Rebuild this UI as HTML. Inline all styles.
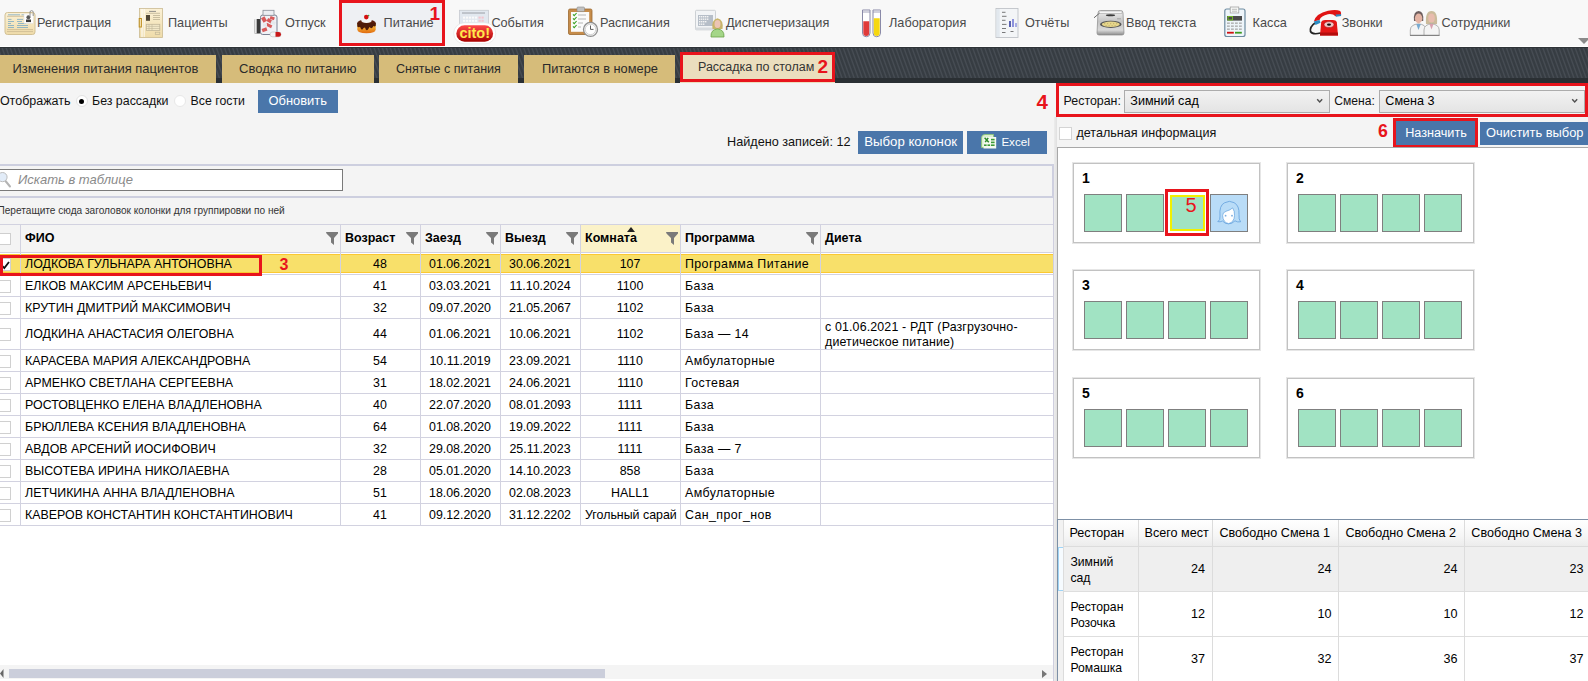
<!DOCTYPE html><html><head><meta charset="utf-8"><style>
*{box-sizing:border-box;margin:0;padding:0}
html,body{width:1588px;height:681px;overflow:hidden}
body{position:relative;background:#f4f4f4;font-family:"Liberation Sans",sans-serif;color:#222}
.t{position:absolute;line-height:1;white-space:nowrap}
.b{position:absolute}
svg{position:absolute;overflow:visible}
</style></head><body><div class="b" style="left:0px;top:0px;width:1588px;height:46px;background:#f8f8f8"></div>
<div class="b" style="left:0px;top:46px;width:1588px;height:1px;background:#ffffff"></div>
<div class="b" style="left:339px;top:0px;width:106px;height:46px;background:#eef0f3"></div>
<div class="t" style="left:37px;top:17px;font-size:12.7px;color:#4a4a4a;">Регистрация</div>
<div class="t" style="left:168px;top:17px;font-size:12.7px;color:#4a4a4a;">Пациенты</div>
<div class="t" style="left:285px;top:17px;font-size:12.7px;color:#4a4a4a;">Отпуск</div>
<div class="t" style="left:383.6px;top:17px;font-size:12.7px;color:#4a4a4a;">Питание</div>
<div class="t" style="left:491.4px;top:17px;font-size:12.7px;color:#4a4a4a;">События</div>
<div class="t" style="left:600px;top:17px;font-size:12.7px;color:#4a4a4a;">Расписания</div>
<div class="t" style="left:726px;top:17px;font-size:12.7px;color:#4a4a4a;">Диспетчеризация</div>
<div class="t" style="left:889px;top:17px;font-size:12.7px;color:#4a4a4a;">Лаборатория</div>
<div class="t" style="left:1025px;top:17px;font-size:12.7px;color:#4a4a4a;">Отчёты</div>
<div class="t" style="left:1126px;top:17px;font-size:12.7px;color:#4a4a4a;">Ввод текста</div>
<div class="t" style="left:1252.6px;top:17px;font-size:12.7px;color:#4a4a4a;">Касса</div>
<div class="t" style="left:1341.7px;top:17px;font-size:12.7px;color:#4a4a4a;">Звонки</div>
<div class="t" style="left:1441.6px;top:17px;font-size:12.7px;color:#4a4a4a;">Сотрудники</div>

<svg style="left:0;top:0" width="1588" height="47" viewBox="0 0 1588 47">
<defs>
<linearGradient id="gCream" x1="0" y1="0" x2="0" y2="1"><stop offset="0" stop-color="#fbf1d6"/><stop offset="1" stop-color="#efdcaa"/></linearGradient>
<linearGradient id="gRed" x1="0" y1="0" x2="0" y2="1"><stop offset="0" stop-color="#ff4a4a"/><stop offset="1" stop-color="#a80000"/></linearGradient>
<linearGradient id="gGray" x1="0" y1="0" x2="0" y2="1"><stop offset="0" stop-color="#e6e6e6"/><stop offset="1" stop-color="#9a9a9a"/></linearGradient>
<linearGradient id="gCake" x1="0" y1="0" x2="0" y2="1"><stop offset="0" stop-color="#ffd040"/><stop offset="1" stop-color="#e06a10"/></linearGradient>
</defs>
<!-- 1 registration card -->
<rect x="5" y="12.5" width="30" height="22" rx="2.5" fill="url(#gCream)" stroke="#d2c196" stroke-width="1"/>
<g stroke="#6aa2c4" stroke-width="0.7">
<line x1="8" y1="14.8" x2="20" y2="14.8"/><line x1="21.5" y1="14.8" x2="24" y2="14.8"/>
<line x1="8" y1="19.4" x2="11.5" y2="19.4"/><line x1="17" y1="19.4" x2="23" y2="19.4"/>
<line x1="8" y1="21.5" x2="14" y2="21.5"/><line x1="17" y1="21.5" x2="22" y2="21.5"/>
<line x1="8" y1="23.5" x2="11" y2="23.5"/><line x1="18" y1="23.5" x2="26" y2="23.5"/>
<line x1="8" y1="25.5" x2="14" y2="25.5"/><line x1="17" y1="25.5" x2="28" y2="25.5"/>
<line x1="8" y1="27.5" x2="14" y2="27.5"/><line x1="17" y1="27.5" x2="28" y2="27.5"/>
</g>
<g stroke="#c9b88f" stroke-width="0.8"><line x1="7" y1="16.3" x2="33" y2="16.3"/><line x1="7" y1="29.6" x2="33" y2="29.6"/><line x1="7" y1="31.6" x2="33" y2="31.6"/></g>
<rect x="24" y="14" width="9.2" height="9.4" fill="#fff" stroke="#ddd" stroke-width="0.5"/>
<circle cx="28.4" cy="17.2" r="2" fill="#5a5a5a"/><rect x="26" y="19.5" width="5" height="2.6" fill="#3a3a3a"/>
<path d="M30 17 V12.2 a1.6 1.6 0 0 1 3.2 0 V16" fill="none" stroke="#8a8a8a" stroke-width="0.9"/>
<!-- 2 patients doc -->
<rect x="139.5" y="8.5" width="23" height="29" fill="url(#gCream)" stroke="#cbbb92" stroke-width="0.8"/>
<line x1="142" y1="9" x2="142" y2="37" stroke="#fff" stroke-width="1"/><line x1="144.2" y1="9" x2="144.2" y2="37" stroke="#fff" stroke-width="0.8"/>
<rect x="139.2" y="18.5" width="2.2" height="8.5" fill="none" stroke="#c09020" stroke-width="1"/>
<line x1="149" y1="11.4" x2="156" y2="11.4" stroke="#777" stroke-width="0.8"/>
<line x1="146" y1="13.3" x2="160" y2="13.3" stroke="#bcb394" stroke-width="0.8"/>
<rect x="146" y="15" width="4" height="5.8" fill="#4f4636"/>
<g stroke="#bcb394" stroke-width="0.8"><line x1="153" y1="15.5" x2="160" y2="15.5"/><line x1="153" y1="17.5" x2="160" y2="17.5"/><line x1="153" y1="19.5" x2="160" y2="19.5"/></g>
<rect x="146.3" y="24.3" width="13.5" height="6.3" fill="#f3e8c8" stroke="#c0b698" stroke-width="0.8"/>
<g stroke="#c0b698" stroke-width="0.6"><line x1="146" y1="26.4" x2="160" y2="26.4"/><line x1="146" y1="28.5" x2="160" y2="28.5"/><line x1="149" y1="24.3" x2="149" y2="30.6"/><line x1="152" y1="24.3" x2="152" y2="30.6"/></g>
<rect x="155.3" y="32.2" width="4.5" height="2.3" fill="none" stroke="#c0b698" stroke-width="0.7"/>
<!-- 3 pills jar -->
<rect x="254" y="19" width="7" height="14.5" rx="1.5" fill="#3a3a3a"/><rect x="254.2" y="19" width="2.5" height="14.5" fill="#e8e8e8"/>
<rect x="260.5" y="15" width="16.5" height="19.5" rx="2.2" fill="#f0f2f6" stroke="#7a8294" stroke-width="1"/>
<rect x="263" y="10.3" width="11" height="5" fill="#eceef2" stroke="#8a8e98" stroke-width="0.8"/>
<g fill="#d85a5a"><rect x="262" y="17" width="4" height="5" transform="rotate(-30 264 19.5)"/><rect x="267" y="19" width="5" height="3.5" transform="rotate(30 269.5 20.7)"/><rect x="270" y="16.5" width="4.5" height="3" transform="rotate(20 272 18)"/><rect x="266" y="24" width="6" height="3" transform="rotate(25 269 25.5)"/><rect x="262" y="28" width="5" height="3.5" transform="rotate(-20 264.5 29.7)"/></g>
<g fill="#e4e8ec"><rect x="271" y="21" width="4.5" height="3" transform="rotate(25 273 22.5)"/><rect x="263" y="23.5" width="4" height="3"/></g>
<rect x="270" y="32" width="11" height="4.8" rx="2.4" fill="#f4f4f4" stroke="#b0b0b0" stroke-width="0.5"/><path d="M275.5 32 H278.6 a2.4 2.4 0 0 1 0 4.8 H275.5 Z" fill="#c81818"/>
<!-- 4 cake -->
<path d="M357.3 23.5 V29.5 Q357.5 33.3 366.5 33.3 Q375.5 33.3 375.7 29.5 V23.5 Z" fill="url(#gCake)"/>
<ellipse cx="366.5" cy="23" rx="9.3" ry="3.6" fill="#5a1e0a"/>
<path d="M357.2 23 L357.3 26.5 Q358.5 28 360 26.8 L361 29 Q362.5 30.5 363.5 28 L365 27.5 Q366 31.5 368 29.5 L369.5 27 Q371 29 372.5 27.5 L373.5 26 Q375 27 375.8 25.5 L375.8 23 Z" fill="#4e1a08"/>
<ellipse cx="366.5" cy="20.6" rx="5.2" ry="2.4" fill="#f4f4f4"/>
<circle cx="366.3" cy="17.1" r="2.3" fill="#d41010"/><circle cx="368.6" cy="15.6" r="0.8" fill="#40a030"/>
<!-- 5 cito -->
<rect x="459.5" y="10.3" width="29" height="14" fill="#e2e8ef" stroke="#c6cad0" stroke-width="0.8"/>
<line x1="462" y1="13" x2="485" y2="13" stroke="#8a8e94" stroke-width="0.8"/>
<g fill="#fafafa"><rect x="463" y="16.6" width="2.2" height="2"/><rect x="466" y="16.6" width="2.2" height="2"/><rect x="469" y="16.6" width="2.2" height="2"/><rect x="472" y="16.6" width="2.2" height="2"/><rect x="475" y="16.6" width="2.2" height="2"/><rect x="463" y="19.8" width="2.2" height="2"/><rect x="466" y="19.8" width="2.2" height="2"/><rect x="469" y="19.8" width="2.2" height="2"/><rect x="472" y="19.8" width="2.2" height="2"/><rect x="475" y="19.8" width="2.2" height="2"/></g>
<g fill="#f4c4cc"><rect x="478.5" y="16.6" width="2.2" height="2"/><rect x="481.5" y="16.6" width="2.2" height="2"/><rect x="478.5" y="19.8" width="2.2" height="2"/><rect x="481.5" y="19.8" width="2.2" height="2"/></g>
<rect x="453.7" y="22.8" width="42" height="21" rx="10.5" fill="#fff" stroke="#e0e0e0" stroke-width="0.6"/>
<rect x="456.3" y="25.2" width="36.8" height="16.6" rx="8.3" fill="url(#gRed)"/>
<text x="474.7" y="38.3" text-anchor="middle" font-family="Liberation Sans" font-weight="bold" font-size="14.5" fill="#ffe84a">cito!</text>
<!-- 6 schedule -->
<rect x="568.5" y="9" width="23.5" height="25.5" rx="1.5" fill="#c68c4a" stroke="#9a6830" stroke-width="0.8"/>
<rect x="571" y="12" width="18.2" height="19.8" fill="#fbfbfb"/>
<rect x="577" y="7" width="7.5" height="4.6" rx="1" fill="#c0c0c0" stroke="#8a8a8a" stroke-width="0.6"/>
<g fill="none" stroke="#38a020" stroke-width="1.1"><path d="M573 14.3 l1.2 1.3 l2.4 -2.6"/><path d="M573 18.3 l1.2 1.3 l2.4 -2.6"/><path d="M573 22.3 l1.2 1.3 l2.4 -2.6"/><path d="M573 26.3 l1.2 1.3 l2.4 -2.6"/></g>
<g stroke="#999" stroke-width="0.7"><line x1="578" y1="15" x2="586" y2="15"/><line x1="578" y1="19" x2="586" y2="19"/><line x1="578" y1="23" x2="583" y2="23"/><line x1="578" y1="27" x2="581" y2="27"/></g>
<circle cx="590.5" cy="29.4" r="7" fill="#f2f2f2" stroke="#8e8e8e" stroke-width="1.3"/><circle cx="590.5" cy="29.4" r="5.2" fill="#fff" stroke="#bbb" stroke-width="0.6"/>
<path d="M590.5 25.5 V29.4 H593.5" fill="none" stroke="#333" stroke-width="0.8"/>
<!-- 7 dispatch -->
<rect x="695.5" y="10.3" width="20" height="19.5" rx="1" fill="#f2f4f6" stroke="#c2c6ca" stroke-width="0.8"/>
<rect x="698" y="15" width="15" height="11" fill="#b6bec8"/>
<g fill="#f4f4f4"><rect x="699" y="16" width="1.4" height="1.4"/><rect x="701" y="16" width="1.4" height="1.4"/><rect x="703" y="16" width="1.4" height="1.4"/><rect x="705" y="16" width="1.4" height="1.4"/><rect x="707" y="16" width="1.4" height="1.4"/><rect x="699" y="18.5" width="1.4" height="1.4"/><rect x="701" y="18.5" width="1.4" height="1.4"/><rect x="703" y="18.5" width="1.4" height="1.4"/><rect x="705" y="18.5" width="1.4" height="1.4"/><rect x="707" y="18.5" width="1.4" height="1.4"/><rect x="699" y="21" width="1.4" height="1.4"/><rect x="701" y="21" width="1.4" height="1.4"/><rect x="703" y="21" width="1.4" height="1.4"/><rect x="705" y="21" width="1.4" height="1.4"/><rect x="699" y="23.5" width="1.4" height="1.4"/><rect x="701" y="23.5" width="1.4" height="1.4"/><rect x="703" y="23.5" width="1.4" height="1.4"/></g>
<rect x="695.5" y="27.5" width="20" height="2.3" fill="#d8dce0"/>
<path d="M712.5 29 Q711 20 717.5 18.2 Q724 20 722.5 29 Z" fill="#c8b46a"/>
<ellipse cx="717.5" cy="24" rx="3" ry="4" fill="#ecc4b4"/>
<path d="M711 37 Q710.5 29.5 717.5 29 Q724.5 29.5 724 37 Z" fill="#a4d688" stroke="#6aa248" stroke-width="0.8"/>
<!-- 8 lab -->
<path d="M862.5 10 H870 V33 a3.75 3.75 0 0 1 -7.5 0 Z" fill="#fff" stroke="#8a8aa8" stroke-width="1"/>
<path d="M863.3 21.3 H869.2 V33 a2.95 2.95 0 0 1 -5.9 0 Z" fill="#e03a3a"/>
<line x1="862.5" y1="12" x2="870" y2="12" stroke="#8a8aa8" stroke-width="0.8"/>
<path d="M873 10 H880.5 V33 a3.75 3.75 0 0 1 -7.5 0 Z" fill="#fff" stroke="#8a8aa8" stroke-width="1"/>
<path d="M873.8 18.2 H879.7 V33 a2.95 2.95 0 0 1 -5.9 0 Z" fill="#f6d810"/>
<line x1="873" y1="12" x2="880.5" y2="12" stroke="#8a8aa8" stroke-width="0.8"/>
<!-- 9 reports -->
<rect x="996" y="8.5" width="22" height="29" fill="#f3f5f7" stroke="#bfc3c8" stroke-width="0.9"/>
<rect x="996.5" y="9" width="3.2" height="28" fill="#e2e8ee"/>
<g stroke="#444" stroke-width="0.7"><line x1="1002" y1="12.3" x2="1005.5" y2="12.3"/><line x1="1002" y1="16.3" x2="1006.5" y2="16.3"/><line x1="1002" y1="20.3" x2="1005.5" y2="20.3"/><line x1="1002" y1="24.4" x2="1006.5" y2="24.4"/><line x1="1002" y1="28.5" x2="1006" y2="28.5"/><line x1="1002" y1="32.5" x2="1005.5" y2="32.5"/><line x1="1010.5" y1="31.5" x2="1013.5" y2="31.5"/></g>
<rect x="1009" y="21" width="2" height="6" fill="#5a62b0"/><rect x="1012" y="19" width="2" height="8" fill="#8c92dc"/><rect x="1015" y="23" width="2" height="4" fill="#a8ade4"/>
<!-- 10 typewriter -->
<linearGradient id="gTw" x1="0" y1="0" x2="0" y2="1"><stop offset="0" stop-color="#f2f2f2"/><stop offset="0.45" stop-color="#c4c4c4"/><stop offset="0.8" stop-color="#d8d8d8"/><stop offset="1" stop-color="#8c8c8c"/></linearGradient>
<path d="M1098 13 Q1098 10.5 1100.5 10.5 H1120.5 Q1123 10.5 1123 13 L1124 33 Q1124 35 1122 35 H1099 Q1097 35 1097 33 Z" fill="url(#gTw)" stroke="#8a8a8a" stroke-width="0.7"/>
<rect x="1099" y="11" width="23" height="2.4" fill="#f6f6f6" stroke="#9a9a9a" stroke-width="0.5"/>
<path d="M1094 17.8 L1099.5 13.2" stroke="#6a6a6a" stroke-width="1"/>
<ellipse cx="1110.5" cy="15.2" rx="4.6" ry="1" fill="#3a3a3a"/>
<ellipse cx="1110.8" cy="24.3" rx="10.8" ry="3.6" fill="#555"/>
<ellipse cx="1110.8" cy="24.3" rx="9" ry="2.7" fill="#e6d68c"/>
<g fill="#c8b870"><rect x="1104" y="23" width="1.2" height="1.2"/><rect x="1107" y="23" width="1.2" height="1.2"/><rect x="1110" y="23" width="1.2" height="1.2"/><rect x="1113" y="23" width="1.2" height="1.2"/><rect x="1116" y="23" width="1.2" height="1.2"/><rect x="1105.5" y="25" width="1.2" height="1.2"/><rect x="1108.5" y="25" width="1.2" height="1.2"/><rect x="1111.5" y="25" width="1.2" height="1.2"/><rect x="1114.5" y="25" width="1.2" height="1.2"/></g>
<line x1="1117" y1="18.8" x2="1121" y2="18.8" stroke="#888" stroke-width="0.6"/>
<!-- 11 kassa -->
<rect x="1224.8" y="9" width="20.2" height="27.5" rx="2" fill="#eef5fa" stroke="#6d8ba0" stroke-width="1.2"/>
<rect x="1230.2" y="7" width="8.6" height="6" fill="#f6f8f6" stroke="#999" stroke-width="0.7"/>
<line x1="1232" y1="9.3" x2="1237" y2="9.3" stroke="#999" stroke-width="0.6"/><line x1="1232" y1="11.2" x2="1237" y2="11.2" stroke="#999" stroke-width="0.6"/>
<rect x="1227" y="16" width="15" height="4.6" fill="#4a4a4a"/>
<rect x="1228" y="16.5" width="4.5" height="3.5" fill="none" stroke="#7ad020" stroke-width="0.8"/>
<g fill="#a9a9a9"><rect x="1227" y="22.5" width="2.8" height="1.3"/><rect x="1231" y="22.5" width="2.8" height="1.3"/><rect x="1235" y="22.5" width="2.8" height="1.3"/><rect x="1239" y="22.5" width="2.8" height="1.3"/><rect x="1227" y="25.5" width="2.8" height="1.3"/><rect x="1231" y="25.5" width="2.8" height="1.3"/><rect x="1235" y="25.5" width="2.8" height="1.3"/><rect x="1239" y="25.5" width="2.8" height="1.3"/><rect x="1227" y="28.5" width="2.8" height="1.3"/><rect x="1231" y="28.5" width="2.8" height="1.3"/><rect x="1235" y="28.5" width="2.8" height="1.3"/><rect x="1239" y="28.5" width="2.8" height="1.3"/></g>
<rect x="1227" y="31.8" width="6.8" height="1.8" fill="#d01010"/><rect x="1235" y="31.8" width="6.8" height="1.8" fill="#3a9a20"/>
<!-- 12 phone -->
<path d="M1315 23 Q1309.5 27 1310.5 31.5 Q1312.5 35 1320.5 33" fill="none" stroke="#222" stroke-width="1.7"/>
<path d="M1313.8 21.5 Q1316 13.5 1328 10.8 Q1336 9.2 1340.2 11 Q1341.5 12.2 1341 15.5 L1335.5 16.2 Q1333 13.5 1328 14.2 Q1321 15.8 1319.5 20 Z" fill="#e01414"/>
<path d="M1313.8 21.5 L1319.5 20 L1320.5 22.8 L1315.5 25 Z" fill="#2a8cc4"/>
<path d="M1335.5 14.6 L1341.2 14.2 L1341 16 L1336 16.8 Z" fill="#2a8cc4"/>
<path d="M1320 35.4 L1321.2 22 Q1322 20 1325 20 H1333 Q1336 20 1336.8 22 L1338 35.4 Z" fill="#e41616"/>
<rect x="1320" y="32.5" width="18" height="3" fill="#b40c0c"/>
<ellipse cx="1329" cy="24.6" rx="5" ry="3" fill="#f0c4c4" stroke="#a01010" stroke-width="0.5"/><ellipse cx="1329" cy="24.6" rx="2" ry="1.2" fill="#111"/>
<!-- 13 staff -->
<path d="M1410.3 35.5 V30 Q1410.5 24.5 1418.5 23.8 Q1426 24.5 1426.2 30 V35.5 Z" fill="#f4f4f4" stroke="#a0a0a0" stroke-width="0.8"/>
<path d="M1416.3 24 H1420.8 L1418.5 30 Z" fill="#78aad0"/>
<path d="M1414 21 Q1413 11 1418.7 11 Q1424 11 1423.2 21 Z" fill="#6d5e5e"/>
<ellipse cx="1418.6" cy="18.4" rx="3.7" ry="4.8" fill="#e4b4a4"/>
<path d="M1426 24 Q1425 11 1431.5 11 Q1438 11 1437 24 Z" fill="#cbbb9b"/>
<ellipse cx="1431.5" cy="18" rx="3.3" ry="4.5" fill="#e8bcae"/>
<path d="M1424 35.5 V30 Q1424.2 24.5 1431.5 23.8 Q1439 24.5 1439.2 30 V35.5 Z" fill="#f4f4f4" stroke="#a0a0a0" stroke-width="0.8"/>
<path d="M1429.5 24 H1433.5 L1431.5 29.5 Z" fill="#d8a0ae"/>
<line x1="1410" y1="35.3" x2="1439.5" y2="35.3" stroke="#777" stroke-width="1"/>
<!-- dropdown triangle -->
<path d="M1578 38 L1590 38 L1584 44 Z" fill="#8a8a8a"/>
</svg>

<div class="b" style="left:339px;top:0px;width:106px;height:46px;border:3px solid #e8141c"></div>
<div class="t" style="left:429.5px;top:4px;font-size:19px;color:#e8141c;font-weight:bold;">1</div>
<div class="b" style="left:0px;top:47px;width:1588px;height:36px;background:repeating-linear-gradient(70deg,#363c42 0px,#373d43 1.4px,#464c53 2.4px,#464c53 2.8px,#363c42 3.8px)"></div>
<div class="b" style="left:0px;top:47px;width:1588px;height:1px;background:#2f3438"></div>
<div class="b" style="left:0px;top:78px;width:1588px;height:5px;background:#2a2f33"></div>
<div class="b" style="left:0px;top:55px;width:216px;height:28px;background:#d6bc7a"></div>
<div class="b" style="left:222px;top:55px;width:151.5px;height:28px;background:#d6bc7a"></div>
<div class="b" style="left:379px;top:55px;width:139px;height:28px;background:#d6bc7a"></div>
<div class="b" style="left:524px;top:55px;width:151px;height:28px;background:#d6bc7a"></div>
<div class="t" style="left:12.5px;top:63px;font-size:12.95px;color:#2a2a2a;">Изменения питания пациентов</div>
<div class="t" style="left:239px;top:62px;font-size:13.07px;color:#2a2a2a;">Сводка по питанию</div>
<div class="t" style="left:396px;top:63px;font-size:12.56px;color:#2a2a2a;">Снятые с питания</div>
<div class="t" style="left:542px;top:63px;font-size:12.82px;color:#2a2a2a;">Питаются в номере</div>
<div class="b" style="left:680px;top:52px;width:155px;height:31px;background:#ebdebe"></div>
<div class="t" style="left:698px;top:61px;font-size:12.5px;color:#333;">Рассадка по столам</div>
<div class="b" style="left:680px;top:52px;width:155px;height:30px;border:3px solid #e8141c"></div>
<div class="t" style="left:817.5px;top:57px;font-size:19px;color:#e8141c;font-weight:bold;">2</div>
<div class="t" style="right:1517.5px;top:95px;font-size:12.5px;color:#111;">Отображать</div>
<div class="b" style="left:75.5px;top:95.4px;width:12px;height:12px;border-radius:50%;background:#fff;border:1px solid #e2e2e2"></div>
<div class="b" style="left:79px;top:99px;width:5px;height:5px;border-radius:50%;background:#000"></div>
<div class="t" style="left:92px;top:95px;font-size:12.4px;color:#111;">Без рассадки</div>
<div class="b" style="left:173.5px;top:95.4px;width:12px;height:12px;border-radius:50%;background:#fff;border:1px solid #e8e8e8"></div>
<div class="t" style="left:190.6px;top:95px;font-size:12.3px;color:#111;">Все гости</div>
<div class="b" style="left:258px;top:90px;width:80px;height:22.5px;background:#4a76aa"></div>
<div class="t" style="left:268.5px;top:95px;font-size:12.9px;color:#fff;">Обновить</div>
<div class="t" style="left:727px;top:136px;font-size:12.66px;color:#111;">Найдено записей: 12</div>
<div class="b" style="left:858px;top:131px;width:105px;height:23px;background:#4a76aa"></div>
<div class="t" style="left:864.3px;top:135px;font-size:13.2px;color:#fff;">Выбор колонок</div>
<div class="b" style="left:967px;top:131px;width:80px;height:23px;background:#4a76aa"></div>
<div class="t" style="left:1001.4px;top:136px;font-size:11.6px;color:#fff;">Excel</div>
<svg style="left:981px;top:134px" width="16" height="15" viewBox="0 0 16 15">
<path d="M0.5 13.5 V4 Q0.5 0.5 4 0.5 H12.5 V13.5 Z" fill="#dcefd0" stroke="#8cc870" stroke-width="0.8"/>
<path d="M2.5 3 H15.2 V14.5 H2.5 Z" fill="#f4f9f0"/>
<path d="M3.6 3.8 L7.8 8.2 M7.2 3.8 L4.2 8.2" stroke="#2e8a2a" stroke-width="1.5"/>
<g fill="#3c9a38"><rect x="10" y="4.8" width="3.6" height="1.6"/><rect x="10" y="7.6" width="3.6" height="1.6"/><rect x="10" y="10.4" width="3.6" height="1.6"/><rect x="3" y="10.4" width="2.6" height="1.6"/><rect x="6.5" y="10.4" width="2.6" height="1.6"/></g>
</svg>
<div class="b" style="left:-4px;top:164px;width:1058px;height:34px;border:2px solid #cdcfdf;background:#f4f4f4"></div>
<div class="b" style="left:-2px;top:168.6px;width:344.5px;height:22.900000000000006px;background:#fff;border:1px solid #7a7a7a"></div>
<svg style="left:0px;top:170px" width="14" height="20" viewBox="0 0 14 20"><line x1="5.5" y1="11" x2="10" y2="16.5" stroke="#b4b4b4" stroke-width="2" stroke-linecap="round"/><circle cx="2.5" cy="7.1" r="4.6" fill="#e2ecf8" stroke="#bcbcbc" stroke-width="1"/></svg>
<div class="t" style="left:18px;top:173px;font-size:13px;color:#8a8a8a;font-style:italic;">Искать в таблице</div>
<div class="b" style="left:-2px;top:198px;width:1056px;height:27px;border-right:1px solid #d2d2e2;border-bottom:1px solid #d2d2e2"></div>
<div class="t" style="left:-2.5px;top:206px;font-size:10.1px;color:#333;">Перетащите сюда заголовок колонки для группировки по ней</div>
<div class="b" style="left:0px;top:253px;width:1053px;height:412px;background:#fff"></div>
<div class="b" style="left:0px;top:225px;width:1053px;height:28px;background:#f4f4f4"></div>
<div class="b" style="left:580px;top:225px;width:100px;height:27px;background:#fbf2c8"></div>
<div class="b" style="left:0px;top:252px;width:1053px;height:1px;background:#d2d2e0"></div>
<div class="t" style="left:25px;top:232px;font-size:12.5px;color:#000;font-weight:bold;">ФИО</div>
<div class="t" style="left:345px;top:232px;font-size:12.5px;color:#000;font-weight:bold;">Возраст</div>
<div class="t" style="left:425px;top:232px;font-size:12.5px;color:#000;font-weight:bold;">Заезд</div>
<div class="t" style="left:505px;top:232px;font-size:12.5px;color:#000;font-weight:bold;">Выезд</div>
<div class="t" style="left:585px;top:232px;font-size:12.5px;color:#000;font-weight:bold;">Комната</div>
<div class="t" style="left:685px;top:232px;font-size:12.5px;color:#000;font-weight:bold;">Программа</div>
<div class="t" style="left:825px;top:232px;font-size:12.5px;color:#000;font-weight:bold;">Диета</div>
<div class="b" style="left:-2px;top:232.5px;width:12.5px;height:12.5px;background:#fff;border:1px solid #cfcfcf"></div>
<svg style="left:325.5px;top:232px" width="12" height="13" viewBox="0 0 12 13"><path d="M0 0 H12 V1.5 L8 6 V13 L5 10.5 V6 L0.5 1.5 Z" fill="#7a7a7a"/></svg>
<svg style="left:405.5px;top:232px" width="12" height="13" viewBox="0 0 12 13"><path d="M0 0 H12 V1.5 L8 6 V13 L5 10.5 V6 L0.5 1.5 Z" fill="#7a7a7a"/></svg>
<svg style="left:485.5px;top:232px" width="12" height="13" viewBox="0 0 12 13"><path d="M0 0 H12 V1.5 L8 6 V13 L5 10.5 V6 L0.5 1.5 Z" fill="#7a7a7a"/></svg>
<svg style="left:565.5px;top:232px" width="12" height="13" viewBox="0 0 12 13"><path d="M0 0 H12 V1.5 L8 6 V13 L5 10.5 V6 L0.5 1.5 Z" fill="#7a7a7a"/></svg>
<svg style="left:665.5px;top:232px" width="12" height="13" viewBox="0 0 12 13"><path d="M0 0 H12 V1.5 L8 6 V13 L5 10.5 V6 L0.5 1.5 Z" fill="#7a7a7a"/></svg>
<svg style="left:805.5px;top:232px" width="12" height="13" viewBox="0 0 12 13"><path d="M0 0 H12 V1.5 L8 6 V13 L5 10.5 V6 L0.5 1.5 Z" fill="#7a7a7a"/></svg>
<svg style="left:627px;top:227px" width="8" height="5" viewBox="0 0 8 5"><path d="M0 5 L4 0 L8 5 Z" fill="#222"/></svg>
<div class="b" style="left:0px;top:254px;width:1053px;height:19px;background:#f8e06a"></div>
<div class="b" style="left:0px;top:254px;width:1053px;height:1px;background:#fbc832"></div>
<div class="b" style="left:0px;top:272px;width:1053px;height:1px;background:#fbc832"></div>
<div class="b" style="left:0px;top:274px;width:1053px;height:1px;background:#d2d2e0"></div>
<div class="t" style="left:25px;top:258px;font-size:12.4px;color:#000;">ЛОДКОВА ГУЛЬНАРА АНТОНОВНА</div>
<div class="t" style="left:340px;width:80px;text-align:center;top:258px;font-size:12.4px;color:#000;">48</div>
<div class="t" style="left:420px;width:80px;text-align:center;top:258px;font-size:12.4px;color:#000;">01.06.2021</div>
<div class="t" style="left:500px;width:80px;text-align:center;top:258px;font-size:12.4px;color:#000;">30.06.2021</div>
<div class="t" style="left:580px;width:100px;text-align:center;top:258px;font-size:12.4px;color:#000;">107</div>
<div class="t" style="left:685px;top:258px;font-size:12.4px;color:#000;letter-spacing:0.4px;">Программа Питание</div>
<div class="b" style="left:-2px;top:257.5px;width:12.5px;height:13.0px;background:#fff;border:1px solid #d0d0d0"></div>
<svg style="left:1px;top:260.5px" width="9" height="8" viewBox="0 0 9 8"><path d="M1 4.5 L3.3 7 L8 1" fill="none" stroke="#111" stroke-width="1.8"/></svg>
<div class="b" style="left:0px;top:296px;width:1053px;height:1px;background:#d2d2e0"></div>
<div class="t" style="left:25px;top:280px;font-size:12.4px;color:#000;">ЕЛКОВ МАКСИМ АРСЕНЬЕВИЧ</div>
<div class="t" style="left:340px;width:80px;text-align:center;top:280px;font-size:12.4px;color:#000;">41</div>
<div class="t" style="left:420px;width:80px;text-align:center;top:280px;font-size:12.4px;color:#000;">03.03.2021</div>
<div class="t" style="left:500px;width:80px;text-align:center;top:280px;font-size:12.4px;color:#000;">11.10.2024</div>
<div class="t" style="left:580px;width:100px;text-align:center;top:280px;font-size:12.4px;color:#000;">1100</div>
<div class="t" style="left:685px;top:280px;font-size:12.4px;color:#000;letter-spacing:0.4px;">База</div>
<div class="b" style="left:-2px;top:279.5px;width:12.5px;height:13.0px;background:#fff;border:1px solid #d0d0d0"></div>
<div class="b" style="left:0px;top:318px;width:1053px;height:1px;background:#d2d2e0"></div>
<div class="t" style="left:25px;top:302px;font-size:12.4px;color:#000;">КРУТИН ДМИТРИЙ МАКСИМОВИЧ</div>
<div class="t" style="left:340px;width:80px;text-align:center;top:302px;font-size:12.4px;color:#000;">32</div>
<div class="t" style="left:420px;width:80px;text-align:center;top:302px;font-size:12.4px;color:#000;">09.07.2020</div>
<div class="t" style="left:500px;width:80px;text-align:center;top:302px;font-size:12.4px;color:#000;">21.05.2067</div>
<div class="t" style="left:580px;width:100px;text-align:center;top:302px;font-size:12.4px;color:#000;">1102</div>
<div class="t" style="left:685px;top:302px;font-size:12.4px;color:#000;letter-spacing:0.4px;">База</div>
<div class="b" style="left:-2px;top:301.5px;width:12.5px;height:13.0px;background:#fff;border:1px solid #d0d0d0"></div>
<div class="b" style="left:0px;top:349px;width:1053px;height:1px;background:#d2d2e0"></div>
<div class="t" style="left:25px;top:328px;font-size:12.4px;color:#000;">ЛОДКИНА АНАСТАСИЯ ОЛЕГОВНА</div>
<div class="t" style="left:340px;width:80px;text-align:center;top:328px;font-size:12.4px;color:#000;">44</div>
<div class="t" style="left:420px;width:80px;text-align:center;top:328px;font-size:12.4px;color:#000;">01.06.2021</div>
<div class="t" style="left:500px;width:80px;text-align:center;top:328px;font-size:12.4px;color:#000;">10.06.2021</div>
<div class="t" style="left:580px;width:100px;text-align:center;top:328px;font-size:12.4px;color:#000;">1102</div>
<div class="t" style="left:685px;top:328px;font-size:12.4px;color:#000;letter-spacing:0.4px;">База — 14</div>
<div class="t" style="left:825px;top:321px;font-size:12.4px;color:#000;letter-spacing:0.15px;">с 01.06.2021 - РДТ (Разгрузочно-</div>
<div class="t" style="left:825px;top:336px;font-size:12.4px;color:#000;letter-spacing:0.15px;">диетическое питание)</div>
<div class="b" style="left:-2px;top:328.0px;width:12.5px;height:13.0px;background:#fff;border:1px solid #d0d0d0"></div>
<div class="b" style="left:0px;top:371px;width:1053px;height:1px;background:#d2d2e0"></div>
<div class="t" style="left:25px;top:355px;font-size:12.4px;color:#000;">КАРАСЕВА МАРИЯ АЛЕКСАНДРОВНА</div>
<div class="t" style="left:340px;width:80px;text-align:center;top:355px;font-size:12.4px;color:#000;">54</div>
<div class="t" style="left:420px;width:80px;text-align:center;top:355px;font-size:12.4px;color:#000;">10.11.2019</div>
<div class="t" style="left:500px;width:80px;text-align:center;top:355px;font-size:12.4px;color:#000;">23.09.2021</div>
<div class="t" style="left:580px;width:100px;text-align:center;top:355px;font-size:12.4px;color:#000;">1110</div>
<div class="t" style="left:685px;top:355px;font-size:12.4px;color:#000;letter-spacing:0.4px;">Амбулаторные</div>
<div class="b" style="left:-2px;top:354.5px;width:12.5px;height:13.0px;background:#fff;border:1px solid #d0d0d0"></div>
<div class="b" style="left:0px;top:393px;width:1053px;height:1px;background:#d2d2e0"></div>
<div class="t" style="left:25px;top:377px;font-size:12.4px;color:#000;">АРМЕНКО СВЕТЛАНА СЕРГЕЕВНА</div>
<div class="t" style="left:340px;width:80px;text-align:center;top:377px;font-size:12.4px;color:#000;">31</div>
<div class="t" style="left:420px;width:80px;text-align:center;top:377px;font-size:12.4px;color:#000;">18.02.2021</div>
<div class="t" style="left:500px;width:80px;text-align:center;top:377px;font-size:12.4px;color:#000;">24.06.2021</div>
<div class="t" style="left:580px;width:100px;text-align:center;top:377px;font-size:12.4px;color:#000;">1110</div>
<div class="t" style="left:685px;top:377px;font-size:12.4px;color:#000;letter-spacing:0.4px;">Гостевая</div>
<div class="b" style="left:-2px;top:376.5px;width:12.5px;height:13.0px;background:#fff;border:1px solid #d0d0d0"></div>
<div class="b" style="left:0px;top:415px;width:1053px;height:1px;background:#d2d2e0"></div>
<div class="t" style="left:25px;top:399px;font-size:12.4px;color:#000;">РОСТОВЦЕНКО ЕЛЕНА ВЛАДЛЕНОВНА</div>
<div class="t" style="left:340px;width:80px;text-align:center;top:399px;font-size:12.4px;color:#000;">40</div>
<div class="t" style="left:420px;width:80px;text-align:center;top:399px;font-size:12.4px;color:#000;">22.07.2020</div>
<div class="t" style="left:500px;width:80px;text-align:center;top:399px;font-size:12.4px;color:#000;">08.01.2093</div>
<div class="t" style="left:580px;width:100px;text-align:center;top:399px;font-size:12.4px;color:#000;">1111</div>
<div class="t" style="left:685px;top:399px;font-size:12.4px;color:#000;letter-spacing:0.4px;">База</div>
<div class="b" style="left:-2px;top:398.5px;width:12.5px;height:13.0px;background:#fff;border:1px solid #d0d0d0"></div>
<div class="b" style="left:0px;top:437px;width:1053px;height:1px;background:#d2d2e0"></div>
<div class="t" style="left:25px;top:421px;font-size:12.4px;color:#000;">БРЮЛЛЕВА КСЕНИЯ ВЛАДЛЕНОВНА</div>
<div class="t" style="left:340px;width:80px;text-align:center;top:421px;font-size:12.4px;color:#000;">64</div>
<div class="t" style="left:420px;width:80px;text-align:center;top:421px;font-size:12.4px;color:#000;">01.08.2020</div>
<div class="t" style="left:500px;width:80px;text-align:center;top:421px;font-size:12.4px;color:#000;">19.09.2022</div>
<div class="t" style="left:580px;width:100px;text-align:center;top:421px;font-size:12.4px;color:#000;">1111</div>
<div class="t" style="left:685px;top:421px;font-size:12.4px;color:#000;letter-spacing:0.4px;">База</div>
<div class="b" style="left:-2px;top:420.5px;width:12.5px;height:13.0px;background:#fff;border:1px solid #d0d0d0"></div>
<div class="b" style="left:0px;top:459px;width:1053px;height:1px;background:#d2d2e0"></div>
<div class="t" style="left:25px;top:443px;font-size:12.4px;color:#000;">АВДОВ АРСЕНИЙ ИОСИФОВИЧ</div>
<div class="t" style="left:340px;width:80px;text-align:center;top:443px;font-size:12.4px;color:#000;">32</div>
<div class="t" style="left:420px;width:80px;text-align:center;top:443px;font-size:12.4px;color:#000;">29.08.2020</div>
<div class="t" style="left:500px;width:80px;text-align:center;top:443px;font-size:12.4px;color:#000;">25.11.2023</div>
<div class="t" style="left:580px;width:100px;text-align:center;top:443px;font-size:12.4px;color:#000;">1111</div>
<div class="t" style="left:685px;top:443px;font-size:12.4px;color:#000;letter-spacing:0.4px;">База — 7</div>
<div class="b" style="left:-2px;top:442.5px;width:12.5px;height:13.0px;background:#fff;border:1px solid #d0d0d0"></div>
<div class="b" style="left:0px;top:481px;width:1053px;height:1px;background:#d2d2e0"></div>
<div class="t" style="left:25px;top:465px;font-size:12.4px;color:#000;">ВЫСОТЕВА ИРИНА НИКОЛАЕВНА</div>
<div class="t" style="left:340px;width:80px;text-align:center;top:465px;font-size:12.4px;color:#000;">28</div>
<div class="t" style="left:420px;width:80px;text-align:center;top:465px;font-size:12.4px;color:#000;">05.01.2020</div>
<div class="t" style="left:500px;width:80px;text-align:center;top:465px;font-size:12.4px;color:#000;">14.10.2023</div>
<div class="t" style="left:580px;width:100px;text-align:center;top:465px;font-size:12.4px;color:#000;">858</div>
<div class="t" style="left:685px;top:465px;font-size:12.4px;color:#000;letter-spacing:0.4px;">База</div>
<div class="b" style="left:-2px;top:464.5px;width:12.5px;height:13.0px;background:#fff;border:1px solid #d0d0d0"></div>
<div class="b" style="left:0px;top:503px;width:1053px;height:1px;background:#d2d2e0"></div>
<div class="t" style="left:25px;top:487px;font-size:12.4px;color:#000;">ЛЕТЧИКИНА АННА ВЛАДЛЕНОВНА</div>
<div class="t" style="left:340px;width:80px;text-align:center;top:487px;font-size:12.4px;color:#000;">51</div>
<div class="t" style="left:420px;width:80px;text-align:center;top:487px;font-size:12.4px;color:#000;">18.06.2020</div>
<div class="t" style="left:500px;width:80px;text-align:center;top:487px;font-size:12.4px;color:#000;">02.08.2023</div>
<div class="t" style="left:580px;width:100px;text-align:center;top:487px;font-size:12.4px;color:#000;">HALL1</div>
<div class="t" style="left:685px;top:487px;font-size:12.4px;color:#000;letter-spacing:0.4px;">Амбулаторные</div>
<div class="b" style="left:-2px;top:486.5px;width:12.5px;height:13.0px;background:#fff;border:1px solid #d0d0d0"></div>
<div class="b" style="left:0px;top:525px;width:1053px;height:1px;background:#d2d2e0"></div>
<div class="t" style="left:25px;top:509px;font-size:12.4px;color:#000;">КАВЕРОВ КОНСТАНТИН КОНСТАНТИНОВИЧ</div>
<div class="t" style="left:340px;width:80px;text-align:center;top:509px;font-size:12.4px;color:#000;">41</div>
<div class="t" style="left:420px;width:80px;text-align:center;top:509px;font-size:12.4px;color:#000;">09.12.2020</div>
<div class="t" style="left:500px;width:80px;text-align:center;top:509px;font-size:12.4px;color:#000;">31.12.2202</div>
<div class="b" style="left:585px;top:504px;width:94px;height:21px;overflow:hidden"><div class="t" style="left:0px;top:5px;font-size:12.4px;color:#000;">Угольный сарай</div></div>
<div class="t" style="left:685px;top:509px;font-size:12.4px;color:#000;letter-spacing:0.4px;">Сан_прог_нов</div>
<div class="b" style="left:-2px;top:508.5px;width:12.5px;height:13.0px;background:#fff;border:1px solid #d0d0d0"></div>
<div class="b" style="left:20px;top:225px;width:1px;height:301px;background:#d2d2e0"></div>
<div class="b" style="left:340px;top:225px;width:1px;height:301px;background:#d2d2e0"></div>
<div class="b" style="left:420px;top:225px;width:1px;height:301px;background:#d2d2e0"></div>
<div class="b" style="left:500px;top:225px;width:1px;height:301px;background:#d2d2e0"></div>
<div class="b" style="left:580px;top:225px;width:1px;height:301px;background:#d2d2e0"></div>
<div class="b" style="left:680px;top:225px;width:1px;height:301px;background:#d2d2e0"></div>
<div class="b" style="left:820px;top:225px;width:1px;height:301px;background:#d2d2e0"></div>
<div class="b" style="left:0px;top:224px;width:1053px;height:1px;background:#d2d2e0"></div>
<div class="b" style="left:1053px;top:165px;width:1px;height:516px;background:#cfcfdf"></div>
<div class="b" style="left:0px;top:254.5px;width:262px;height:21.0px;border:3px solid #e8141c"></div>
<div class="t" style="left:279.5px;top:257px;font-size:16px;color:#e8141c;font-weight:bold;">3</div>
<div class="b" style="left:0px;top:665px;width:1053px;height:14px;background:#f4f4f4"></div>
<div class="b" style="left:9px;top:669px;width:596px;height:9px;background:#cbcedb"></div>
<svg style="left:0px;top:669px" width="4" height="9" viewBox="0 0 4 9"><path d="M3.5 0 V9 L0 4.5 Z" fill="#666"/></svg>
<svg style="left:1042px;top:669.5px" width="5" height="8" viewBox="0 0 5 8"><path d="M0 0 V8 L5 4 Z" fill="#777"/></svg>
<div class="b" style="left:0px;top:679px;width:1053px;height:2px;background:#fff"></div>
<div class="b" style="left:1054px;top:117px;width:3px;height:564px;background:linear-gradient(90deg,#ececec,#e0e0e0)"></div>
<div class="b" style="left:1057px;top:147px;width:1px;height:372px;background:#a8a8a8"></div>
<div class="t" style="left:1036.5px;top:92px;font-size:20.5px;color:#e8141c;font-weight:bold;">4</div>
<div class="t" style="left:1063.6px;top:95px;font-size:12.4px;color:#111;">Ресторан:</div>
<div class="b" style="left:1124px;top:90px;width:206px;height:22.5px;background:linear-gradient(#f2f2f2,#e4e4e4);border:1px solid #acacac"></div>
<div class="t" style="left:1130.3px;top:95px;font-size:12.6px;color:#000;">Зимний сад</div>
<svg style="left:1316px;top:98px" width="8" height="6" viewBox="0 0 8 6"><path d="M1.2 1.2 L3.7 4 L6.2 1.2" fill="none" stroke="#505050" stroke-width="1.4"/></svg>
<div class="b" style="left:1379px;top:90px;width:206px;height:22.5px;background:linear-gradient(#f2f2f2,#e4e4e4);border:1px solid #acacac"></div>
<div class="t" style="left:1385.3px;top:95px;font-size:12.6px;color:#000;">Смена 3</div>
<svg style="left:1571px;top:98px" width="8" height="6" viewBox="0 0 8 6"><path d="M1.2 1.2 L3.7 4 L6.2 1.2" fill="none" stroke="#505050" stroke-width="1.4"/></svg>
<div class="t" style="left:1334.3px;top:95px;font-size:12.1px;color:#111;">Смена:</div>
<div class="b" style="left:1056px;top:83px;width:532px;height:34px;border:3px solid #e8141c"></div>
<div class="b" style="left:1059.4px;top:127px;width:12.599999999999909px;height:12.5px;background:#fff;border:1px solid #d4d4d4"></div>
<div class="t" style="left:1076.4px;top:127px;font-size:12.6px;color:#111;">детальная информация</div>
<div class="t" style="left:1378px;top:123px;font-size:17.7px;color:#e8141c;font-weight:bold;">6</div>
<div class="b" style="left:1396px;top:121.4px;width:79px;height:23.599999999999994px;background:#4a76aa"></div>
<div class="t" style="left:1405.2px;top:127px;font-size:12.65px;color:#fff;">Назначить</div>
<div class="b" style="left:1393px;top:118px;width:85px;height:29.5px;border:3px solid #e8141c"></div>
<div class="b" style="left:1480px;top:122px;width:110px;height:22.599999999999994px;background:#4a76aa"></div>
<div class="t" style="left:1486px;top:127px;font-size:12.9px;color:#fff;">Очистить выбор</div>
<div class="b" style="left:1057px;top:147px;width:531px;height:1px;background:#a8a8a8"></div>
<div class="b" style="left:1058px;top:148px;width:530px;height:371px;background:#fff"></div>
<div class="b" style="left:1073px;top:163px;width:187px;height:80px;border:1px solid #c2c2c2;box-shadow:0 0 0 1px #e6e6e6;background:#fff"></div><div class="t" style="left:1082px;top:171px;font-size:14px;color:#000;font-weight:bold;">1</div><div class="b" style="left:1084px;top:194px;width:38px;height:38px;background:#a1e3c3;border:1px solid #7f7f7f"></div><div class="b" style="left:1126px;top:194px;width:38px;height:38px;background:#a1e3c3;border:1px solid #7f7f7f"></div><div class="b" style="left:1168px;top:192px;width:38px;height:41px;background:#fff"></div><div class="b" style="left:1170px;top:195px;width:35px;height:36px;background:#a1e3c3;border:2.5px solid #f2f000"></div><div class="b" style="left:1210px;top:194px;width:38px;height:38px;background:#b9dcf7;border:1px solid #7f7f7f"></div><svg style="left:1210px;top:194px" width="38" height="38" viewBox="0 0 38 38">
<path d="M7.8 27.6 Q10.5 26.5 10 22 Q9 11.5 14.5 8.8 Q19.5 6 24 8.6 Q29.5 11.5 29 20.5 Q28.6 25.5 30.6 27.8 Q27.5 28.5 25 26.8 Q22 30 18.5 29.8 Q15 30 12.5 27 Q10 28.3 7.8 27.6 Z" fill="#b9dcf7" stroke="#62a0dc" stroke-width="0.8"/>
<path d="M12.6 21.5 Q12.5 18.5 16 17.3 Q20.5 16 22.6 13.9 Q24.8 17 24.5 21.5 Q24.2 28.2 18.6 29.6 Q13 28.6 12.6 21.5 Z" fill="#fff" stroke="#62a0dc" stroke-width="0.7"/>
<circle cx="15.6" cy="21.7" r="0.9" fill="#7aaee0"/><circle cx="22" cy="21.7" r="0.9" fill="#7aaee0"/>
</svg>
<div class="b" style="left:1287px;top:163px;width:187px;height:80px;border:1px solid #c2c2c2;box-shadow:0 0 0 1px #e6e6e6;background:#fff"></div><div class="t" style="left:1296px;top:171px;font-size:14px;color:#000;font-weight:bold;">2</div><div class="b" style="left:1298px;top:194px;width:38px;height:38px;background:#a1e3c3;border:1px solid #7f7f7f"></div><div class="b" style="left:1340px;top:194px;width:38px;height:38px;background:#a1e3c3;border:1px solid #7f7f7f"></div><div class="b" style="left:1382px;top:194px;width:38px;height:38px;background:#a1e3c3;border:1px solid #7f7f7f"></div><div class="b" style="left:1424px;top:194px;width:38px;height:38px;background:#a1e3c3;border:1px solid #7f7f7f"></div>
<div class="b" style="left:1073px;top:270px;width:187px;height:80px;border:1px solid #c2c2c2;box-shadow:0 0 0 1px #e6e6e6;background:#fff"></div><div class="t" style="left:1082px;top:278px;font-size:14px;color:#000;font-weight:bold;">3</div><div class="b" style="left:1084px;top:301px;width:38px;height:38px;background:#a1e3c3;border:1px solid #7f7f7f"></div><div class="b" style="left:1126px;top:301px;width:38px;height:38px;background:#a1e3c3;border:1px solid #7f7f7f"></div><div class="b" style="left:1168px;top:301px;width:38px;height:38px;background:#a1e3c3;border:1px solid #7f7f7f"></div><div class="b" style="left:1210px;top:301px;width:38px;height:38px;background:#a1e3c3;border:1px solid #7f7f7f"></div>
<div class="b" style="left:1287px;top:270px;width:187px;height:80px;border:1px solid #c2c2c2;box-shadow:0 0 0 1px #e6e6e6;background:#fff"></div><div class="t" style="left:1296px;top:278px;font-size:14px;color:#000;font-weight:bold;">4</div><div class="b" style="left:1298px;top:301px;width:38px;height:38px;background:#a1e3c3;border:1px solid #7f7f7f"></div><div class="b" style="left:1340px;top:301px;width:38px;height:38px;background:#a1e3c3;border:1px solid #7f7f7f"></div><div class="b" style="left:1382px;top:301px;width:38px;height:38px;background:#a1e3c3;border:1px solid #7f7f7f"></div><div class="b" style="left:1424px;top:301px;width:38px;height:38px;background:#a1e3c3;border:1px solid #7f7f7f"></div>
<div class="b" style="left:1073px;top:378px;width:187px;height:80px;border:1px solid #c2c2c2;box-shadow:0 0 0 1px #e6e6e6;background:#fff"></div><div class="t" style="left:1082px;top:386px;font-size:14px;color:#000;font-weight:bold;">5</div><div class="b" style="left:1084px;top:409px;width:38px;height:38px;background:#a1e3c3;border:1px solid #7f7f7f"></div><div class="b" style="left:1126px;top:409px;width:38px;height:38px;background:#a1e3c3;border:1px solid #7f7f7f"></div><div class="b" style="left:1168px;top:409px;width:38px;height:38px;background:#a1e3c3;border:1px solid #7f7f7f"></div><div class="b" style="left:1210px;top:409px;width:38px;height:38px;background:#a1e3c3;border:1px solid #7f7f7f"></div>
<div class="b" style="left:1287px;top:378px;width:187px;height:80px;border:1px solid #c2c2c2;box-shadow:0 0 0 1px #e6e6e6;background:#fff"></div><div class="t" style="left:1296px;top:386px;font-size:14px;color:#000;font-weight:bold;">6</div><div class="b" style="left:1298px;top:409px;width:38px;height:38px;background:#a1e3c3;border:1px solid #7f7f7f"></div><div class="b" style="left:1340px;top:409px;width:38px;height:38px;background:#a1e3c3;border:1px solid #7f7f7f"></div><div class="b" style="left:1382px;top:409px;width:38px;height:38px;background:#a1e3c3;border:1px solid #7f7f7f"></div><div class="b" style="left:1424px;top:409px;width:38px;height:38px;background:#a1e3c3;border:1px solid #7f7f7f"></div>
<div class="b" style="left:1165px;top:189px;width:44px;height:47px;border:3px solid #e8141c"></div>
<div class="t" style="left:1185.4px;top:195px;font-size:20px;color:#e8141c;">5</div>
<div class="b" style="left:1057px;top:519px;width:531px;height:1px;background:#7d90a6"></div>
<div class="b" style="left:1057px;top:519px;width:1px;height:162px;background:#7d90a6"></div>
<div class="b" style="left:1058px;top:520px;width:530px;height:161px;background:#fff"></div>
<div class="b" style="left:1058px;top:520px;width:530px;height:26px;background:linear-gradient(#ffffff,#f6f6f6 60%,#ececec)"></div>
<div class="b" style="left:1058px;top:546px;width:530px;height:1px;background:#dcdcdc"></div>
<div class="b" style="left:1063px;top:547px;width:525px;height:44px;background:#efefef"></div>
<div class="b" style="left:1058px;top:520px;width:5px;height:161px;background:#f2f2f2"></div>
<div class="b" style="left:1058px;top:547px;width:6px;height:44px;border:1px solid #9fd4f6;border-right:none;background:#f6fbff"></div>
<div class="b" style="left:1063px;top:591px;width:525px;height:1px;background:#dedede"></div>
<div class="b" style="left:1063px;top:636px;width:525px;height:1px;background:#dedede"></div>
<div class="b" style="left:1063px;top:520px;width:1px;height:161px;background:#dcdcdc"></div>
<div class="b" style="left:1138px;top:520px;width:1px;height:161px;background:#dcdcdc"></div>
<div class="b" style="left:1212px;top:520px;width:1px;height:161px;background:#dcdcdc"></div>
<div class="b" style="left:1338px;top:520px;width:1px;height:161px;background:#dcdcdc"></div>
<div class="b" style="left:1464px;top:520px;width:1px;height:161px;background:#dcdcdc"></div>
<div class="t" style="left:1069.5px;top:527px;font-size:12.6px;color:#000;">Ресторан</div>
<div class="t" style="left:1144.5px;top:527px;font-size:12.6px;color:#000;">Всего мест</div>
<div class="t" style="left:1219.4px;top:527px;font-size:12.6px;color:#000;">Свободно Смена 1</div>
<div class="t" style="left:1345.4px;top:527px;font-size:12.6px;color:#000;">Свободно Смена 2</div>
<div class="t" style="left:1471.3px;top:527px;font-size:12.6px;color:#000;">Свободно Смена 3</div>
<div class="t" style="left:1070.4px;top:556px;font-size:12.2px;color:#000;">Зимний</div>
<div class="t" style="left:1070.4px;top:572px;font-size:12.2px;color:#000;">сад</div>
<div class="t" style="right:383px;top:563px;font-size:12.6px;color:#000;">24</div>
<div class="t" style="right:256.4000000000001px;top:563px;font-size:12.6px;color:#000;">24</div>
<div class="t" style="right:130.5px;top:563px;font-size:12.6px;color:#000;">24</div>
<div class="t" style="right:4.5px;top:563px;font-size:12.6px;color:#000;">23</div>
<div class="t" style="left:1070.4px;top:601px;font-size:12.2px;color:#000;">Ресторан</div>
<div class="t" style="left:1070.4px;top:617px;font-size:12.2px;color:#000;">Розочка</div>
<div class="t" style="right:383px;top:608px;font-size:12.6px;color:#000;">12</div>
<div class="t" style="right:256.4000000000001px;top:608px;font-size:12.6px;color:#000;">10</div>
<div class="t" style="right:130.5px;top:608px;font-size:12.6px;color:#000;">10</div>
<div class="t" style="right:4.5px;top:608px;font-size:12.6px;color:#000;">12</div>
<div class="t" style="left:1070.4px;top:646px;font-size:12.2px;color:#000;">Ресторан</div>
<div class="t" style="left:1070.4px;top:662px;font-size:12.2px;color:#000;">Ромашка</div>
<div class="t" style="right:383px;top:653px;font-size:12.6px;color:#000;">37</div>
<div class="t" style="right:256.4000000000001px;top:653px;font-size:12.6px;color:#000;">32</div>
<div class="t" style="right:130.5px;top:653px;font-size:12.6px;color:#000;">36</div>
<div class="t" style="right:4.5px;top:653px;font-size:12.6px;color:#000;">37</div></body></html>
